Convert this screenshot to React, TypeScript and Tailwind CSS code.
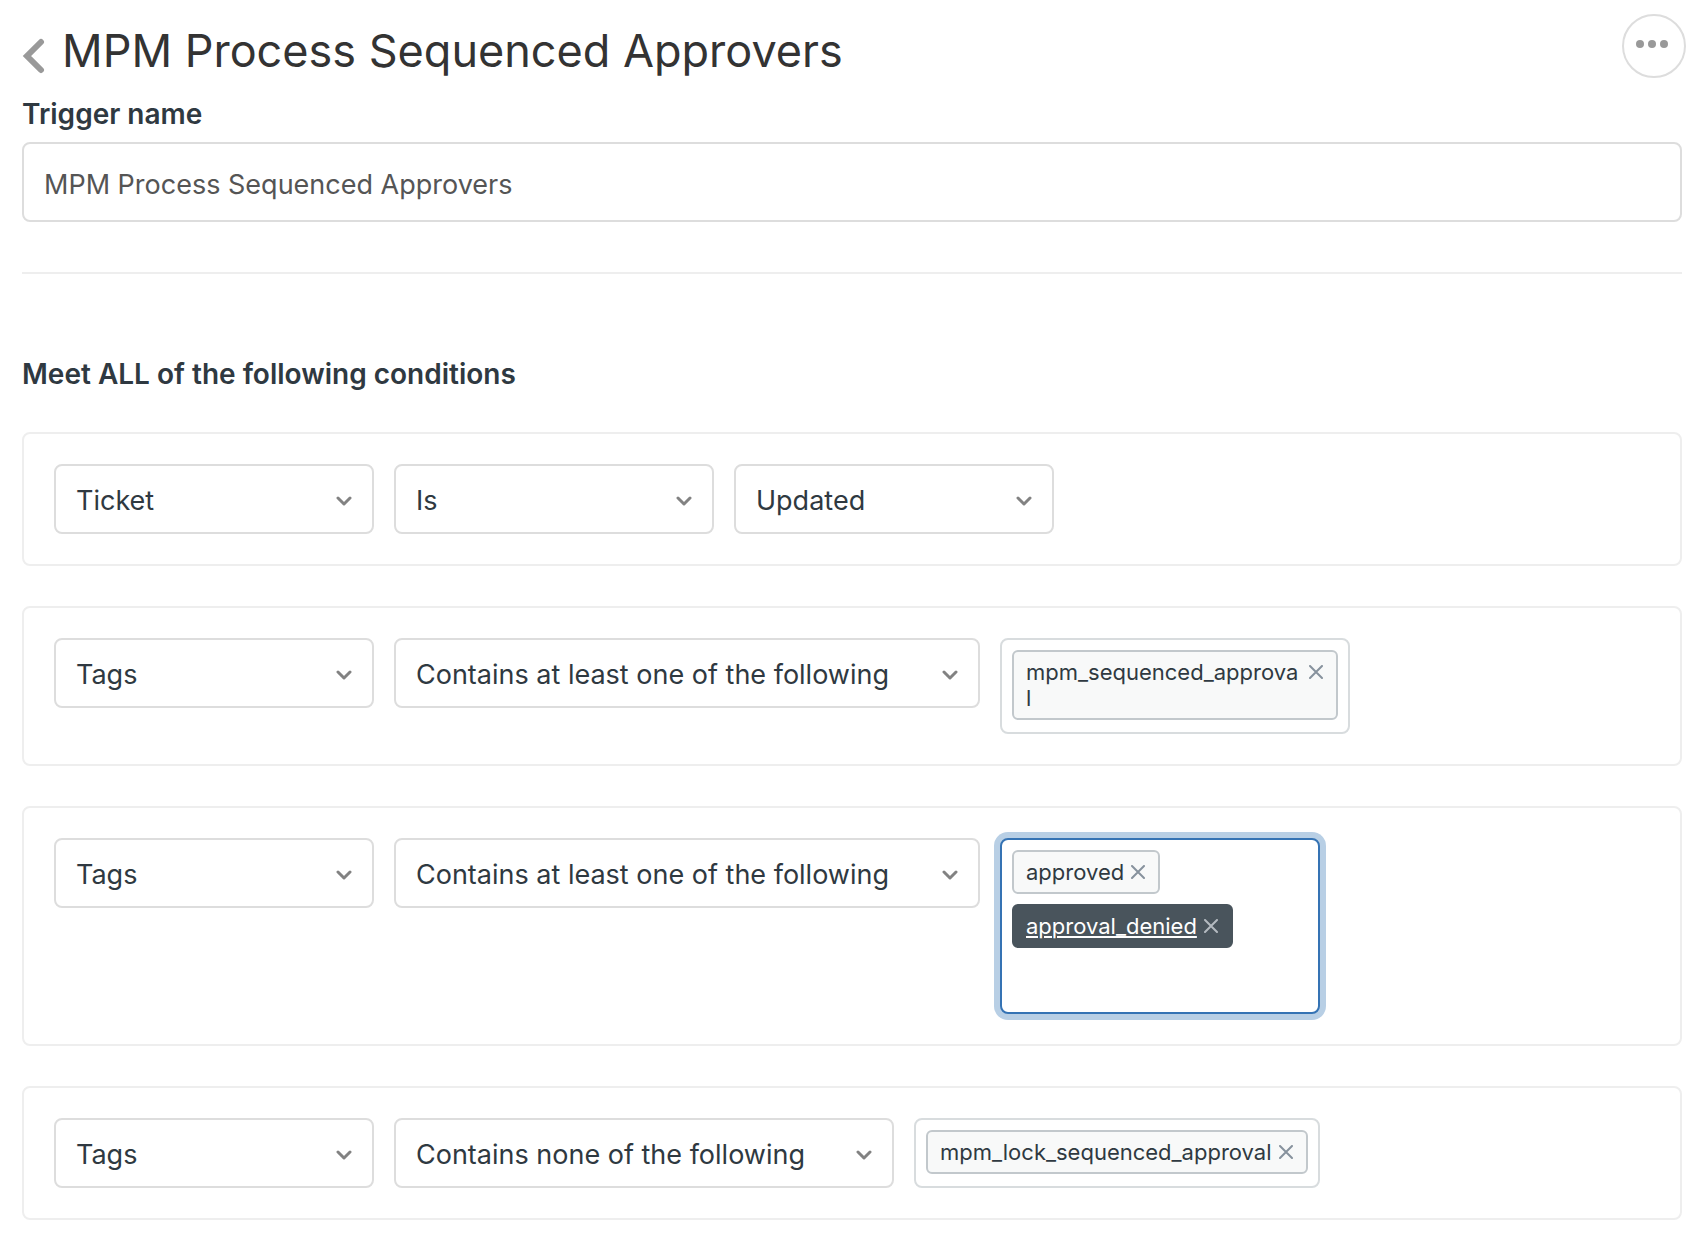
import { useState } from "react";

type TagItem = { name: string; active?: boolean };

type Condition = {
  field: string;
  operator: string;
  operatorWidth: string;
  value?: string;
  tags?: TagItem[];
  boxClass?: string;
};

const conditions: Condition[] = [
  { field: "Ticket", operator: "Is", operatorWidth: "w-80", value: "Updated" },
  {
    field: "Tags",
    operator: "Contains at least one of the following",
    operatorWidth: "w-[586px]",
    tags: [{ name: "mpm_sequenced_approval" }],
    boxClass: "w-[350px] border-[#d8dcde]",
  },
  {
    field: "Tags",
    operator: "Contains at least one of the following",
    operatorWidth: "w-[586px]",
    tags: [{ name: "approved" }, { name: "approval_denied", active: true }],
    boxClass: "w-80 min-h-44 border-[#3573b4] ring-6 ring-[#b8cfe5]",
  },
  {
    field: "Tags",
    operator: "Contains none of the following",
    operatorWidth: "w-[500px]",
    tags: [{ name: "mpm_lock_sequenced_approval" }],
    boxClass: "border-[#d8dcde]",
  },
];

function Select({ label, value, width }: { label: string; value: string; width: string }) {
  return (
    <div className={`relative shrink-0 ${width}`}>
      <select
        aria-label={label}
        defaultValue={value}
        className="block h-[70px] w-full appearance-none rounded-lg border-2 border-[#ddd] bg-white pt-1 pr-12 pl-5 text-[27px] text-[#2f3941]"
      >
        <option>{value}</option>
      </select>
      <svg
        viewBox="0 0 16 10"
        className="pointer-events-none absolute top-8 right-[22px] h-2.5 w-4"
        fill="none"
        stroke="#828282"
        strokeWidth="3"
        strokeLinecap="round"
        strokeLinejoin="round"
        aria-hidden="true"
      >
        <path d="M2 2l6 6 6-6" />
      </svg>
    </div>
  );
}

function Tag({ name, active, onRemove }: TagItem & { onRemove: () => void }) {
  return (
    <li
      className={`flex max-w-full items-start gap-[7px] rounded-md border-2 py-[7px] pr-[13px] pl-3 ${
        active ? "border-[#49545c] bg-[#49545c] text-white" : "border-[#c2c8cc] bg-[#f8f9f9] text-[#2f3941]"
      }`}
    >
      <span
        className={`min-w-0 text-[22px] leading-[26px] break-all ${
          active ? "underline decoration-2 underline-offset-2" : ""
        }`}
      >
        {name}
      </span>
      <button type="button" onClick={onRemove} aria-label={`Remove ${name}`} className="flex h-[26px] shrink-0 items-center">
        <svg
          viewBox="0 0 14 14"
          className="size-3.5"
          fill="none"
          stroke={active ? "#b4bac0" : "#87929d"}
          strokeWidth="2"
          strokeLinecap="round"
          aria-hidden="true"
        >
          <path d="M1 1l12 12M13 1L1 13" />
        </svg>
      </button>
    </li>
  );
}

function TagBox({ initial, className }: { initial: TagItem[]; className: string }) {
  const [tags, setTags] = useState(initial);
  return (
    <ul
      aria-label="Tags"
      className={`flex shrink-0 flex-col items-start gap-2.5 rounded-lg border-2 bg-white px-2.5 pt-2.5 pb-3 ${className}`}
    >
      {tags.map((tag) => (
        <Tag key={tag.name} {...tag} onRemove={() => setTags(tags.filter((t) => t !== tag))} />
      ))}
    </ul>
  );
}

export default function App() {
  return (
    <main className="min-h-screen bg-white font-['Inter',sans-serif] text-[#2f3941]">
      <header className="flex items-start justify-between pt-3.5 pr-3.5 pl-[22px]">
        <div className="flex h-[74px] items-center">
          <button type="button" aria-label="Back" className="mt-2.5 mr-4">
            <svg
              viewBox="0 0 24 36"
              className="h-9 w-6"
              fill="none"
              stroke="#999"
              strokeWidth="6"
              strokeLinecap="round"
              strokeLinejoin="miter"
              aria-hidden="true"
            >
              <path d="M19 4L5 18l14 14" />
            </svg>
          </button>
          <h1 className="text-[45px] leading-[74px] text-[#333]">MPM Process Sequenced Approvers</h1>
        </div>
        <button
          type="button"
          aria-label="More options"
          className="flex size-16 items-center justify-center rounded-full border-2 border-[#ddd]"
        >
          <svg viewBox="0 0 32 8" className="mr-1 mb-1 h-2 w-8" fill="#999" aria-hidden="true">
            <circle cx="4" cy="4" r="4" />
            <circle cx="16" cy="4" r="4" />
            <circle cx="28" cy="4" r="4" />
          </svg>
        </button>
      </header>

      <div className="pr-[18px] pl-[22px]">
        <label htmlFor="trigger-name" className="block pt-2 text-[28px] leading-[36px] font-semibold">
          Trigger name
        </label>
        <input
          id="trigger-name"
          defaultValue="MPM Process Sequenced Approvers"
          className="mt-2.5 block h-20 w-full rounded-lg border-2 border-[#ddd] px-5 pt-1 text-[27px] text-[#555]"
        />
        <hr className="mt-[50px] border-t-2 border-[#eee]" />

        <h2 className="mt-[82px] text-[28px] leading-[36px] font-semibold">Meet ALL of the following conditions</h2>
        <div className="mt-10 flex flex-col gap-10">
          {conditions.map((c, i) => (
            <section key={i} className="flex items-start gap-5 rounded-lg border-2 border-[#eee] p-[30px]">
              <Select label="Field" value={c.field} width="w-80" />
              <Select label="Operator" value={c.operator} width={c.operatorWidth} />
              {c.value && <Select label="Value" value={c.value} width="w-80" />}
              {c.tags && <TagBox initial={c.tags} className={c.boxClass ?? ""} />}
            </section>
          ))}
        </div>
      </div>
    </main>
  );
}
